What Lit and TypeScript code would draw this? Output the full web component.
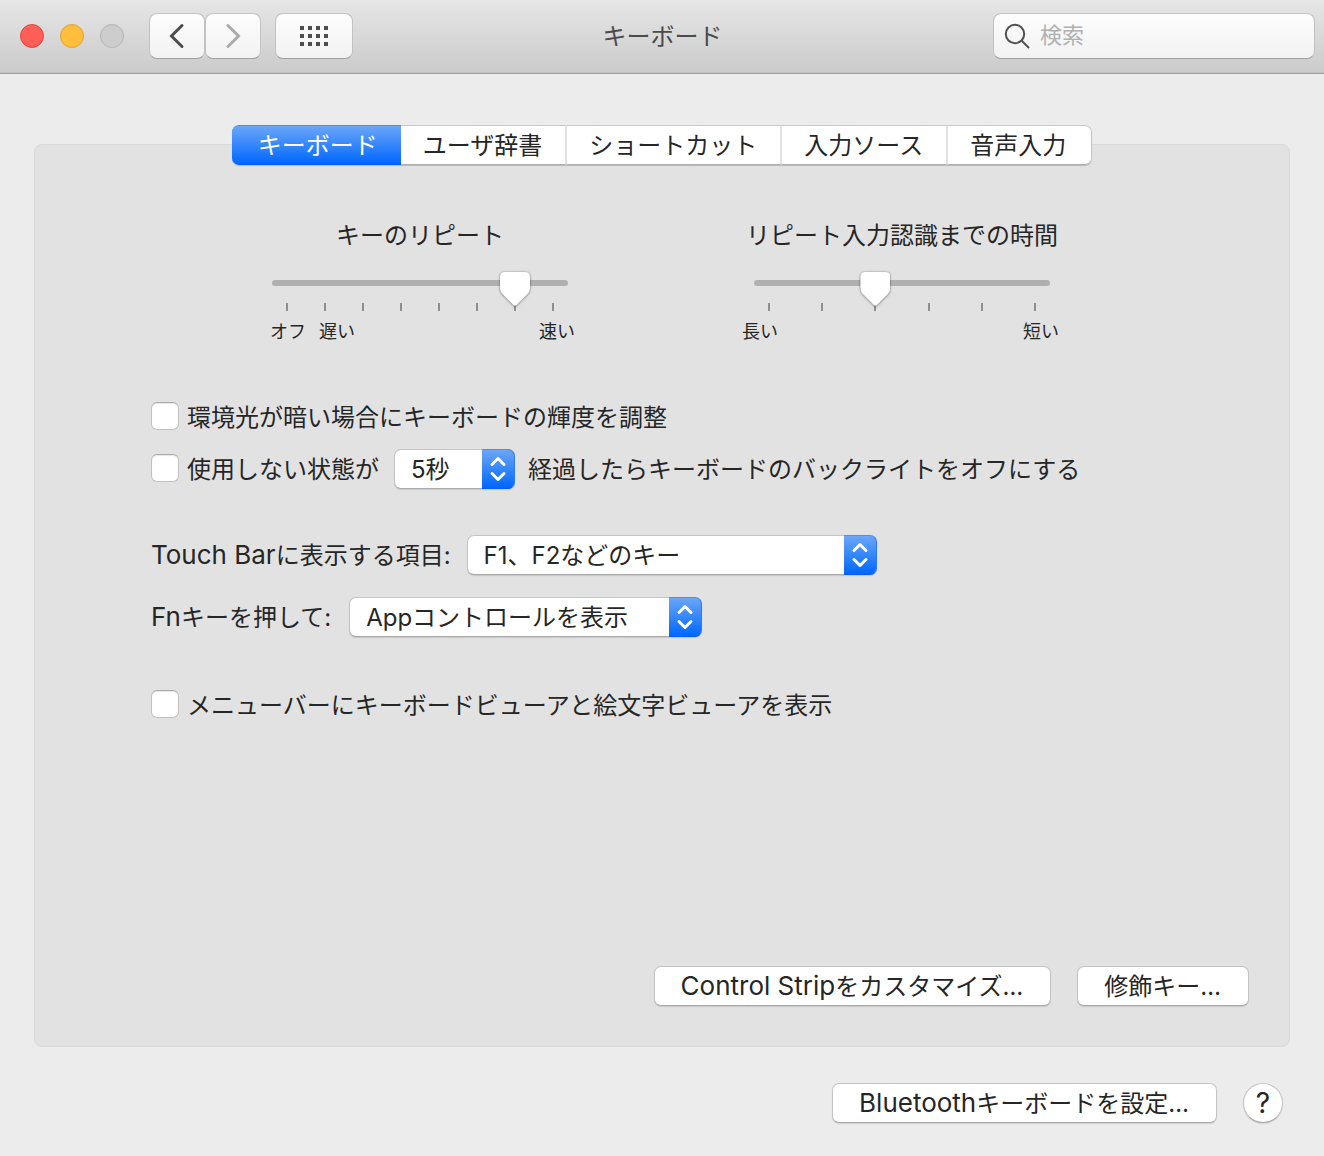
import { LitElement, html, css, svg } from "lit";
import { customElement, property, state } from "lit/decorators.js";

const TABS = ["キーボード", "ユーザ辞書", "ショートカット", "入力ソース", "音声入力"];

@customElement("tick-slider")
class TickSlider extends LitElement {
  @property() label = "";
  @property({ type: Number }) ticks = 2;
  @property({ type: Number }) value = 0;
  @property({ attribute: false }) startLabels: string[] = [];
  @property() endLabel = "";

  static styles = css`
    :host {
      display: flex;
      flex-direction: column;
      width: 296px;
    }
    .title {
      align-self: center;
      white-space: nowrap;
      line-height: 32px;
      margin-bottom: 19px;
    }
    .rail {
      display: grid;
      align-items: start;
      height: 40px;
    }
    .track,
    .marks,
    .range {
      grid-area: 1 / 1;
    }
    .track {
      height: 6px;
      margin-top: 9px;
      border-radius: 3px;
      background: #b0b0b0;
    }
    .marks {
      display: flex;
      justify-content: space-between;
      margin: 32px 14px 0;
    }
    .mark {
      width: 2px;
      height: 8px;
      background: #8f8f8f;
    }
    .range {
      appearance: none;
      width: 100%;
      height: 36px;
      margin: 0;
      background: none;
      outline: none;
      filter: drop-shadow(0 0 1px rgba(0, 0, 0, 0.3)) drop-shadow(0 1px 1px rgba(0, 0, 0, 0.25));
    }
    .range::-webkit-slider-runnable-track {
      height: 36px;
      background: none;
    }
    .range::-webkit-slider-thumb {
      appearance: none;
      width: 30px;
      height: 34px;
      margin-top: 1px;
      background: #fff;
      clip-path: path("M5 0H25Q30 0 30 5V16Q30 19 28 21.5L16.5 33Q15 34.6 13.5 33L2 21.5Q0 19 0 16V5Q0 0 5 0Z");
    }
    .labels {
      display: flex;
      gap: 13px;
      margin: 7px -7px 0 -2px;
      font-size: 18px;
      line-height: 28px;
    }
    :host([wide]) .labels {
      margin: 7px -9px 0 -12px;
    }
    .last {
      margin-left: auto;
    }
  `;

  render() {
    return html`
      <label class="title" for="range">${this.label}</label>
      <div class="rail">
        <div class="track"></div>
        <div class="marks">
          ${Array.from({ length: this.ticks }, () => html`<span class="mark"></span>`)}
        </div>
        <input class="range" id="range" type="range" min="0" max=${this.ticks - 1} step="1" .value=${String(this.value)} />
      </div>
      <div class="labels">
        ${this.startLabels.map((t) => html`<span>${t}</span>`)}
        <span class="last">${this.endLabel}</span>
      </div>
    `;
  }
}

@customElement("app-root")
class AppRoot extends LitElement {
  @state() tab = 0;

  static styles = css`
    :host {
      display: flex;
      flex-direction: column;
      min-height: 100vh;
      box-sizing: border-box;
      background: #ececec;
      color: #262626;
      font-family: Inter, "Noto Sans CJK JP", sans-serif;
      font-size: 24px;
      line-height: 32px;
    }
    * {
      box-sizing: border-box;
    }
    button,
    input,
    select {
      font: inherit;
      color: inherit;
      margin: 0;
    }
    .latin {
      font-size: 26px;
      line-height: 24px;
    }
    .toolbar {
      display: grid;
      grid-template-columns: 1fr auto 1fr;
      align-items: center;
      height: 74px;
      padding: 0 9px 1px 10px;
      background: linear-gradient(#e6e6e6, #cbcbcb);
      border-bottom: 1px solid #a3a3a3;
      box-shadow: inset 0 -1px #c0c0c0;
    }
    .left {
      display: flex;
      align-items: center;
      padding-left: 10px;
    }
    .lights {
      display: flex;
      gap: 16px;
      margin-right: 25px;
    }
    .light {
      width: 24px;
      height: 24px;
      padding: 0;
      border: 1px solid #b3b3b3;
      border-radius: 50%;
      background: #cdcdcd;
    }
    .close {
      border-color: #e2463f;
      background: #ff5f57;
    }
    .minimize {
      border-color: #e0a032;
      background: #ffbe3c;
    }
    .tool {
      display: grid;
      place-items: center;
      width: 56px;
      height: 46px;
      padding: 0;
      border: 1px solid #c2c2c2;
      border-bottom-color: #a0a0a0;
      border-radius: 8px;
      background: linear-gradient(#fdfdfd, #f2f2f2);
    }
    .grid {
      width: 78px;
      margin-left: 14px;
    }
    .heading {
      margin: 0;
      padding-top: 2px;
      font-size: 24px;
      font-weight: 400;
      color: #4b4b4b;
    }
    .search {
      display: flex;
      align-items: center;
      justify-self: end;
      width: 322px;
      height: 46px;
      padding-left: 10px;
      gap: 8px;
      border: 1px solid #c2c2c2;
      border-bottom-color: #a0a0a0;
      border-radius: 8px;
      background: linear-gradient(#fdfdfd, #f2f2f2);
    }
    .search-field {
      flex: 1;
      min-width: 0;
      padding: 0 0 2px;
      border: 0;
      outline: 0;
      background: none;
      font-size: 22px;
    }
    .search-field::placeholder {
      color: #b0b0b0;
      opacity: 1;
    }
    .page {
      flex: 1;
      display: flex;
      flex-direction: column;
      padding: 51px 34px 33px;
    }
    .tabs {
      display: flex;
      align-self: center;
      z-index: 1;
      height: 40px;
      margin-bottom: -21px;
      border-radius: 7px;
      background: #fff;
      box-shadow: 0 1px 1px rgba(0, 0, 0, 0.18);
    }
    .tab {
      padding: 1px 23px 0 22px;
      border: 0;
      border-top: 1px solid #c6c6c6;
      border-right: 2px solid #e2e2e2;
      border-bottom: 1px solid #adadad;
      background: none;
      white-space: nowrap;
      line-height: 36px;
    }
    .tab:first-child {
      padding: 1px 23px 0 26px;
      border-right: 0;
      border-radius: 7px 0 0 7px;
    }
    .tab:last-child {
      padding-right: 25px;
      border-right: 1px solid #c6c6c6;
      border-radius: 0 7px 7px 0;
    }
    .tab.active {
      border-top: 1px solid #4a90ee;
      border-bottom: 1px solid #0360ee;
      background: linear-gradient(#6ba6f9, #0067ff);
      color: #fff;
    }
    .panel {
      flex: 1;
      display: flex;
      flex-direction: column;
      padding: 75px 40px 40px 116px;
      border: 1px solid #dadada;
      border-radius: 8px;
      background: #e2e2e2;
    }
    .sliders {
      display: flex;
      justify-content: center;
      gap: 186px;
      margin: 0 0 51px -78px;
    }
    .row {
      display: flex;
      align-items: center;
      height: 40px;
      white-space: nowrap;
    }
    .row + .row {
      margin-top: 12px;
    }
    .row.group {
      margin-top: 46px;
    }
    .row.next {
      margin-top: 22px;
    }
    .row.viewer {
      margin-top: 48px;
    }
    .row label {
      padding-top: 2px;
    }
    .check {
      appearance: none;
      width: 28px;
      height: 28px;
      margin: 0 8px 2px 0;
      border: 1px solid #c1c1c1;
      border-top-color: #a9a9a9;
      border-radius: 6px;
      background: #fff;
      box-shadow: inset 0 1px 1px rgba(0, 0, 0, 0.1);
    }
    .check:checked {
      background: #0a6cff;
    }
    .popup {
      display: grid;
      width: 121px;
      margin: 0 13px 0 15px;
    }
    .app {
      width: 353px;
      margin: 0 0 0 18px;
    }
    .touch {
      width: 410px;
      margin: 0 0 0 16px;
    }
    .select,
    .cap {
      grid-area: 1 / 1;
    }
    .select,
    .button {
      height: 40px;
      border: 1px solid #c4c4c4;
      border-bottom-color: #a9a9a9;
      border-radius: 7px;
      background: #fff;
      box-shadow: 0 1px 1px rgba(0, 0, 0, 0.12);
    }
    .select {
      appearance: none;
      width: 100%;
      padding: 2px 40px 0 16px;
      outline-offset: 2px;
    }
    .cap {
      display: grid;
      place-items: center;
      justify-self: end;
      width: 33px;
      height: 40px;
      border: 1px solid #3c84ee;
      border-width: 1px 1px 1px 0;
      border-color: #4a90ee #2f7cf2 #0360ee;
      border-radius: 0 7px 7px 0;
      background: linear-gradient(#6ba6f9, #0067ff);
      pointer-events: none;
    }
    .actions,
    .footer {
      display: flex;
      justify-content: flex-end;
      gap: 26px;
    }
    .actions {
      margin-top: auto;
    }
    .footer {
      margin-top: 36px;
      padding-right: 7px;
    }
    .button {
      padding: 2px 27px 0 26px;
      white-space: nowrap;
    }
    .help {
      width: 40px;
      padding: 0;
      border-radius: 50%;
      font-size: 28px;
    }
  `;

  private popup(id: string, kind: string, text: string, label: string) {
    return html`
      <span class="popup ${kind}">
        <select class="select" id=${id} aria-label=${label}>
          <option>${text}</option>
        </select>
        <span class="cap" aria-hidden="true">
          <svg width="18" height="28" viewBox="0 0 18 28" fill="none" stroke="#fff" stroke-width="3" stroke-linecap="round" stroke-linejoin="round">
            <path d="M3 9.500L9 3.500L15 9.500M3 18.500L9 24.500L15 18.500" />
          </svg>
        </span>
      </span>
    `;
  }

  render() {
    const dots = [0, 8, 16].flatMap((y) =>
      [0, 8, 16, 24].map((x) => svg`<rect x=${x} y=${y} width="4" height="4" />`)
    );
    return html`
      <header class="toolbar">
        <div class="left">
          <div class="lights">
            <button class="light close" aria-label="閉じる"></button>
            <button class="light minimize" aria-label="しまう"></button>
            <button class="light" aria-label="拡大" disabled></button>
          </div>
          <button class="tool" aria-label="戻る">
            <svg width="16" height="26" viewBox="0 0 16 26" fill="none" stroke="#4d4d4d" stroke-width="3" stroke-linecap="round" stroke-linejoin="miter">
              <path d="M13 2.500L2.500 13L13 23.500" />
            </svg>
          </button>
          <button class="tool" aria-label="進む">
            <svg width="16" height="26" viewBox="0 0 16 26" fill="none" stroke="#ababab" stroke-width="3" stroke-linecap="round" stroke-linejoin="miter">
              <path d="M3 2.500L13.500 13L3 23.500" />
            </svg>
          </button>
          <button class="tool grid" aria-label="すべてを表示">
            <svg width="28" height="20" viewBox="0 0 28 20" fill="#4d4d4d">${dots}</svg>
          </button>
        </div>
        <h1 class="heading">キーボード</h1>
        <label class="search">
          <svg width="28" height="28" viewBox="0 0 28 28" fill="none" stroke="#505050" stroke-width="2">
            <circle cx="11" cy="12" r="9.200" />
            <path d="M17.500 18.500L25 26" />
          </svg>
          <input class="search-field" type="search" placeholder="検索" aria-label="検索" />
        </label>
      </header>

      <main class="page">
        <div class="tabs" role="tablist">
          ${TABS.map(
            (name, i) => html`
              <button class="tab ${i === this.tab ? "active" : ""}" role="tab" aria-selected=${i === this.tab} @click=${() => (this.tab = i)}>${name}</button>
            `
          )}
        </div>

        <section class="panel">
          <div class="sliders">
            <tick-slider label="キーのリピート" ticks="8" value="6" .startLabels=${["オフ", "遅い"]} endLabel="速い"></tick-slider>
            <tick-slider wide label="リピート入力認識までの時間" ticks="6" value="2" .startLabels=${["長い"]} endLabel="短い"></tick-slider>
          </div>

          <div class="row">
            <input class="check" id="ambient" type="checkbox" />
            <label for="ambient">環境光が暗い場合にキーボードの輝度を調整</label>
          </div>
          <div class="row">
            <input class="check" id="idle" type="checkbox" />
            <label for="idle">使用しない状態が</label>
            ${this.popup("delay", "", "5秒", "時間")}
            <label for="idle">経過したらキーボードのバックライトをオフにする</label>
          </div>
          <div class="row group">
            <label for="touchbar"><span class="latin">Touch Bar</span>に表示する項目:</label>
            ${this.popup("touchbar", "touch", "F1、F2などのキー", "Touch Barに表示する項目")}
          </div>
          <div class="row next">
            <label for="fn"><span class="latin">Fn</span>キーを押して:</label>
            ${this.popup("fn", "app", "Appコントロールを表示", "Fnキーを押して")}
          </div>
          <div class="row viewer">
            <input class="check" id="viewer" type="checkbox" />
            <label for="viewer">メニューバーにキーボードビューアと絵文字ビューアを表示</label>
          </div>

          <div class="actions">
            <button class="button"><span class="latin">Control Strip</span>をカスタマイズ…</button>
            <button class="button">修飾キー…</button>
          </div>
        </section>

        <div class="footer">
          <button class="button"><span class="latin">Bluetooth</span>キーボードを設定…</button>
          <button class="button help" aria-label="ヘルプ">?</button>
        </div>
      </main>
    `;
  }
}
